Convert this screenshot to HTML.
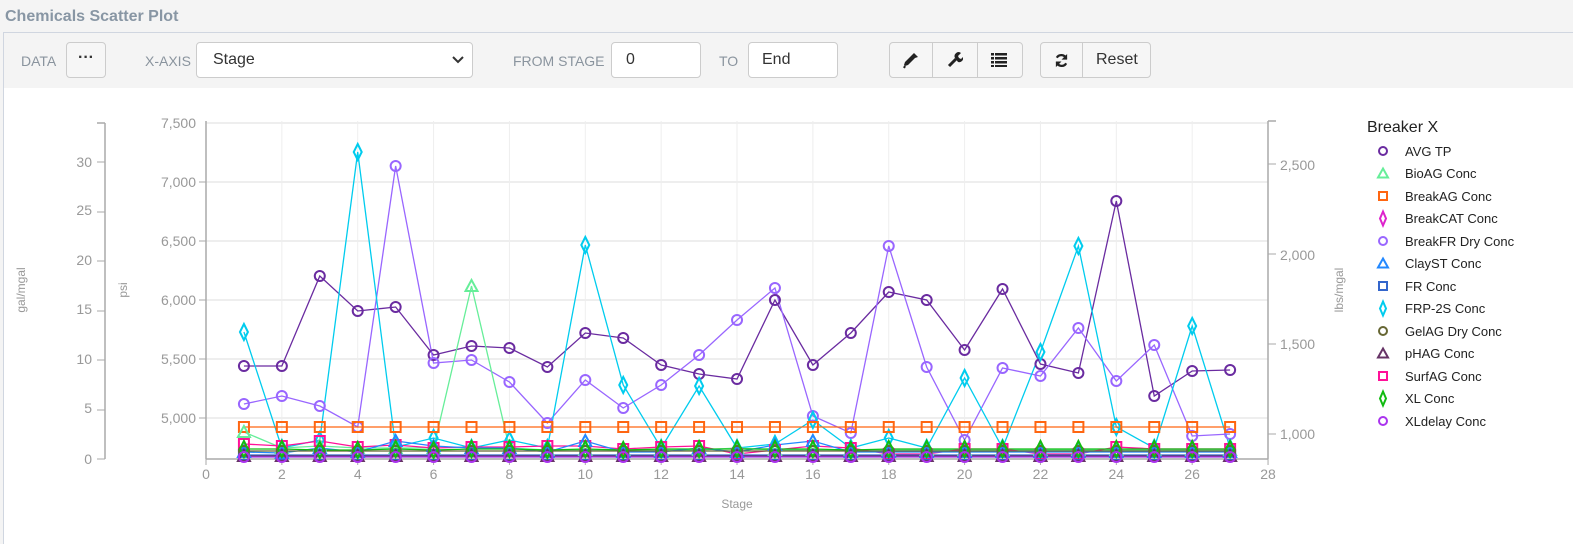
<!DOCTYPE html>
<html><head><meta charset="utf-8"><style>
body{margin:0;width:1573px;height:543px;background:#f4f4f4;font-family:"Liberation Sans",sans-serif;overflow:hidden;position:relative}
.title{position:absolute;left:5px;top:8px;font-size:16px;font-weight:bold;color:#8896a4}
.panel{position:absolute;left:3px;top:32px;width:1570px;height:511px;border-top:1px solid #d0d6e0;border-left:1px solid #d0d6e0;background:#fff}
.tb{position:absolute;left:0;top:0;width:100%;height:55px;background:#f4f4f4}
.lbl{position:absolute;top:20px;font-size:14px;color:#8a949e}
.box{position:absolute;top:9px;height:36px;border:1px solid #ccc;border-radius:4px;background:#fff;box-sizing:border-box;font-size:16px;color:#333;line-height:34px}
.btn{background:#f6f6f6}
</style></head><body>
<div class="title">Chemicals Scatter Plot</div>
<div class="panel">
<div class="tb">
<span class="lbl" style="left:17px">DATA</span>
<div class="box btn" style="left:62px;width:40px;text-align:center;font-weight:bold;line-height:30px">···</div>
<span class="lbl" style="left:141px">X-AXIS</span>
<div class="box" style="left:192px;width:277px;padding-left:16px">Stage<svg style="position:absolute;right:8px;top:13px" width="12" height="8"><path d="M1 1l5 5 5-5" stroke="#333" stroke-width="2" fill="none"/></svg></div>
<span class="lbl" style="left:509px">FROM STAGE</span>
<div class="box" style="left:607px;width:90px;padding-left:14px">0</div>
<span class="lbl" style="left:715px">TO</span>
<div class="box" style="left:744px;width:90px;padding-left:13px">End</div>
<div class="box btn" style="left:885px;width:134px">
<svg style="position:absolute;left:13px;top:9px" width="16" height="17" viewBox="0 0 16 17"><path d="M11 1l4 4-3 1-7 7-3 1-1-1 1-3 7-7z" fill="#222"/><path d="M2 14l-1 2" stroke="#222" stroke-width="2"/></svg>
<div style="position:absolute;left:42px;top:0;width:1px;height:34px;background:#ccc"></div>
<svg style="position:absolute;left:57px;top:9px" width="16" height="16" viewBox="0 0 16 16"><path d="M2 14l7-7" stroke="#222" stroke-width="3"/><path d="M8 6a4 4 0 0 1 6-5l-3 3 1 2 2 1 2-2a4 4 0 0 1-5 5z" fill="#222"/></svg>
<div style="position:absolute;left:87px;top:0;width:1px;height:34px;background:#ccc"></div>
<svg style="position:absolute;left:101px;top:10px" width="16" height="14" viewBox="0 0 16 14"><g fill="#222"><rect x="0" y="0" width="3" height="2.5"/><rect x="4" y="0" width="12" height="2.5"/><rect x="0" y="4" width="3" height="2.5"/><rect x="4" y="4" width="12" height="2.5"/><rect x="0" y="8" width="3" height="2.5"/><rect x="4" y="8" width="12" height="2.5"/><rect x="0" y="12" width="3" height="2"/><rect x="4" y="12" width="12" height="2"/></g></svg>
</div>
<div class="box btn" style="left:1036px;width:111px">
<svg style="position:absolute;left:13px;top:10px" width="15" height="15" viewBox="0 0 16 16"><path d="M13 6A5.5 5.5 0 0 0 3 5" stroke="#222" stroke-width="2.4" fill="none"/><path d="M14 1v6h-6z" fill="#222"/><path d="M3 10a5.5 5.5 0 0 0 10 1" stroke="#222" stroke-width="2.4" fill="none"/><path d="M2 15V9h6z" fill="#222"/></svg>
<div style="position:absolute;left:41px;top:0;width:1px;height:34px;background:#ccc"></div>
<span style="position:absolute;left:55px">Reset</span>
</div>
</div>
</div>
<svg id="ch" style="position:absolute;left:0;top:0" width="1573" height="543" font-family="Liberation Sans, sans-serif" font-size="14" fill="#999">
<g id="grid"></g>
<g stroke="#aaa" stroke-width="1.5" fill="none">
<path d="M105 123V459M97 123h8"/>
<path d="M206 121V459"/>
<path d="M1268 121V459M1268 121h8"/>
<path d="M206 459H1268"/>
</g>
<g text-anchor="end">
<text x="92" y="167">30</text><text x="92" y="215">25</text><text x="92" y="265">20</text><text x="92" y="314">15</text><text x="92" y="364">10</text><text x="92" y="413">5</text><text x="92" y="464">0</text>
<text x="196" y="128">7,500</text><text x="196" y="187">7,000</text><text x="196" y="246">6,500</text><text x="196" y="305">6,000</text><text x="196" y="364">5,500</text><text x="196" y="423">5,000</text>
</g>
<g>
<text x="1280" y="170">2,500</text><text x="1280" y="260">2,000</text><text x="1280" y="349">1,500</text><text x="1280" y="439">1,000</text>
</g>
<g text-anchor="middle" id="xl"></g>
<text transform="translate(25,290) rotate(-90)" text-anchor="middle" font-size="12">gal/mgal</text>
<text transform="translate(127,290) rotate(-90)" text-anchor="middle" font-size="12">psi</text>
<text transform="translate(1343,290) rotate(-90)" text-anchor="middle" font-size="12">lbs/mgal</text>
<text x="737" y="508" text-anchor="middle" font-size="12">Stage</text>
<g id="series"></g>
<g font-size="13" fill="#222">
<text x="1367" y="132" font-size="16">Breaker X</text>
<text x="1405" y="156">AVG TP</text><text x="1405" y="178">BioAG Conc</text><text x="1405" y="201">BreakAG Conc</text><text x="1405" y="223">BreakCAT Conc</text><text x="1405" y="246">BreakFR Dry Conc</text><text x="1405" y="268">ClayST Conc</text><text x="1405" y="291">FR Conc</text><text x="1405" y="313">FRP-2S Conc</text><text x="1405" y="336">GelAG Dry Conc</text><text x="1405" y="358">pHAG Conc</text><text x="1405" y="381">SurfAG Conc</text><text x="1405" y="403">XL Conc</text><text x="1405" y="426">XLdelay Conc</text>
</g>
<g id="leg"></g>
</svg>
<script>
var NS="http://www.w3.org/2000/svg";
function el(p,t,a){var e=document.createElementNS(NS,t);for(var k in a)e.setAttribute(k,a[k]);p.appendChild(e);return e;}
var g=document.getElementById('grid'),xl=document.getElementById('xl');
[123,182,241,300,359,418].forEach(function(y){el(g,'line',{x1:206,x2:1268,y1:y,y2:y,stroke:'#eee','stroke-width':2});});
for(var i=0;i<=28;i+=2){var x=206+i*37.93;if(i>0&&i<28)el(g,'line',{x1:x,x2:x,y1:121,y2:459,stroke:'#eee','stroke-width':1});el(g,'line',{x1:x,x2:x,y1:459,y2:465,stroke:'#aaa'});var t=el(xl,'text',{x:x,y:479});t.textContent=i;}
[162,212,261,311,360,410,459].forEach(function(y){el(g,'line',{x1:97,x2:105,y1:y,y2:y,stroke:'#aaa'});});
[182,241,300,359,418].forEach(function(y){el(g,'line',{x1:199,x2:206,y1:y,y2:y,stroke:'#aaa'});});
[164,254,344,434].forEach(function(y){el(g,'line',{x1:1268,x2:1276,y1:y,y2:y,stroke:'#aaa'});});
function X(n){return 206+n*37.93;}
function mk(p,type,x,y,c,s){s=s||5;
 if(type=='o')el(p,'circle',{cx:x,cy:y,r:s,fill:'none',stroke:c,'stroke-width':2});
 else if(type=='s')el(p,'rect',{x:x-s,y:y-s,width:2*s,height:2*s,fill:'none',stroke:c,'stroke-width':2});
 else if(type=='t')el(p,'path',{d:'M'+x+' '+(y-s-1)+'L'+(x+s+1)+' '+(y+s)+'L'+(x-s-1)+' '+(y+s)+'Z',fill:'none',stroke:c,'stroke-width':2});
 else el(p,'path',{d:'M'+x+' '+(y-s-3)+'L'+(x+s-1)+' '+y+'L'+x+' '+(y+s+3)+'L'+(x-s+1)+' '+y+'Z',fill:'none',stroke:c,'stroke-width':2});}
function rep(v,n){var a=[];for(var i=0;i<n;i++)a.push(v);return a;}
var S=[
['#6a2ba0','o',[366,366,276,311,307,355,346,348,367,333,338,365,374,379,300,365,333,292,300,350,289,364,373,201,396,371,370]],
['#9966ff','o',[404,396,406,427,166,363,360,382,423,380,408,385,355,320,288,416,433,246,367,440,368,376,328,381,345,436,434]],
['#00ccee','d',[332,448,440,152,447,438,448,440,448,245,385,448,386,448,444,420,448,438,448,378,448,352,246,427,448,326,448]],
['#ff6611','s',rep(427,27)],
['#66ee99','t',[432,448,446,448,448,448,286,448,450,450,450,450,450,448,450,450,450,450,450,450,450,450,450,450,450,450,450]],
['#ff1199','s',[444,446,441,447,445,448,447,447,446,446,449,447,446,454,450,446,448,454,454,449,449,454,454,447,449,449,449]],
['#2288ff','t',[452,453,448,452,441,446,448,448,452,441,452,452,448,452,445,441,452,452,452,452,452,452,452,452,452,452,452]],
['#3366cc','s',rep(455,27)],
['#666633','o',rep(451,27)],
['#663366','t',rep(456,27)],
['#11bb11','d',[449,449,450,450,449,450,449,449,450,449,450,449,449,449,449,449,450,449,449,449,449,449,449,449,449,449,449]],
['#aa33ee','o',rep(457,27)]
];
var sr=document.getElementById('series');
S.forEach(function(s){var d='';s[2].forEach(function(y,i){d+=(i?'L':'M')+X(i+1)+' '+y;});el(sr,'path',{d:d,fill:'none',stroke:s[0],'stroke-width':1.3});});
S.forEach(function(s){s[2].forEach(function(y,i){mk(sr,s[1],X(i+1),y,s[0]);});});
var L=[['#6a2ba0','o'],['#66ee99','t'],['#ff6611','s'],['#dd22cc','d'],['#9966ff','o'],['#2288ff','t'],['#3366cc','s'],['#00ccee','d'],['#666633','o'],['#663366','t'],['#ff1199','s'],['#11bb11','d'],['#aa33ee','o']];
var lg=document.getElementById('leg');
L.forEach(function(l,i){mk(lg,l[1],1383,151+i*22.5,l[0],4);});
</script>
</body></html>
